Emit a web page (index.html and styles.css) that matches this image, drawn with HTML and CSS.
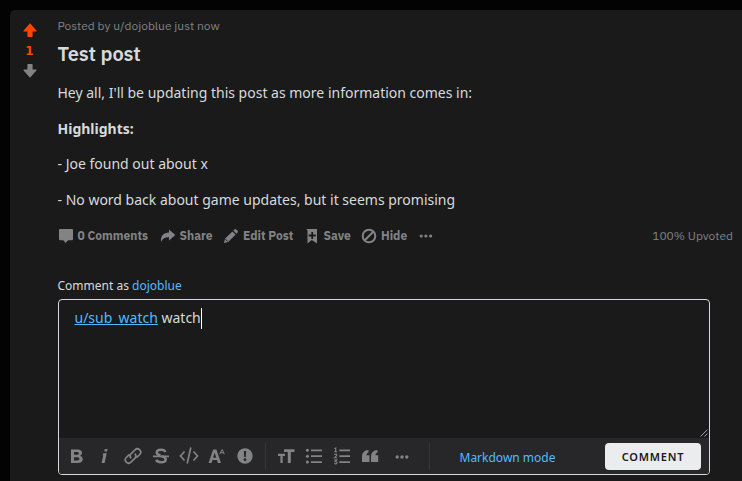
FILE: index.html
```html
<!DOCTYPE html>
<html lang="en">
<head>
<meta charset="utf-8">
<title>Test post</title>
<link rel="stylesheet" href="styles.css">
</head>
<body>
<main class="card">
  <aside class="votes">
    <svg class="vote up" viewBox="0 0 14 14"><path d="M7 0.3 13.6 7.7Q13.8 8.5 13 8.6H9.6V13.3Q9.6 14 9 14H5Q4.4 14 4.4 13.3V8.6H1Q.2 8.5.4 7.7Z"/></svg>
    <span class="score">1</span>
    <svg class="vote down" viewBox="0 0 14 14"><path d="M7 13.7 13.6 6.3Q13.8 5.5 13 5.4H9.6V.7Q9.6 0 9 0H5Q4.4 0 4.4.7V5.4H1Q.2 5.5.4 6.3Z"/></svg>
  </aside>
  <article class="post">
    <div class="byline">Posted by u/dojoblue just now</div>
    <h1>Test post</h1>
    <div class="body">
      <p>Hey all, I'll be updating this post as more information comes in:</p>
      <p><strong>Highlights:</strong></p>
      <p>- Joe found out about x</p>
      <p>- No word back about game updates, but it seems promising</p>
    </div>
    <div class="actions">
      <span class="action comments"><svg viewBox="0 0 16 16"><path d="M2 1H14Q15 1 15 2V11Q15 12.3 14 12.3H10L7.7 15 5.3 12.3H2Q1 12.3 1 11V2Q1 1 2 1Z"/></svg><b>0 Comments</b></span>
      <span class="action share"><svg viewBox="0 0 16 16"><path d="M9 1.5 15.3 7 9 12.5V9.3C5 9.2 3 10.5 1 14 .5 8 3.5 4.8 9 4.6Z"/></svg><b>Share</b></span>
      <span class="action edit"><svg viewBox="0 0 16 16"><path d="M1 15 2 10.8 9.4 3.4 12.6 6.6 5.2 14ZM10.3 2.5 11.4 1.4Q12.3.7 13.2 1.4L14.6 2.8Q15.3 3.7 14.6 4.6L13.5 5.7Z"/><path class="cut" d="M2.5 11.2 4.8 13.5"/></svg><b>Edit Post</b></span>
      <span class="action save"><svg viewBox="0 0 16 16"><path d="M2.2 1H13V15.5L7.8 12 3.5 15.5V2.6Z"/><path class="cut plus" d="M8.2 4V11M4.7 7.5H11.7"/></svg><b>Save</b></span>
      <span class="action hide"><svg viewBox="0 0 16 16"><g class="line"><circle cx="8" cy="8" r="6.3"/><path d="M3.8 12.2 12.2 3.8"/></g></svg><b>Hide</b></span>
      <svg class="more" viewBox="0 0 14 14"><circle cx="2.2" cy="7" r="1.6"/><circle cx="6.9" cy="7" r="1.6"/><circle cx="11.6" cy="7" r="1.6"/></svg>
      <span class="upvoted">100% Upvoted</span>
    </div>
    <div class="comment-as">Comment as <a>dojoblue</a></div>
    <section class="editor">
      <div class="input"><a>u/sub_watch</a> watch<i class="caret"></i>
        <svg class="grip" viewBox="0 0 8 8"><path d="M.5 7.5 7.5.5M4.5 7.5 7.5 4.5"/></svg>
      </div>
      <div class="toolbar">
        <svg class="tool" viewBox="0 0 20 20"><path fill-rule="evenodd" d="M4 3.5H10.5Q15 3.5 15 7 15 9.1 13 9.8 15.8 10.6 15.8 13 15.8 17 10.7 17H4ZM7 6V8.8H10Q11.9 8.8 11.9 7.4 11.9 6 10 6ZM7 11.2V14.5H10.3Q12.5 14.5 12.5 12.8 12.5 11.2 10.3 11.2Z"/></svg>
        <svg class="tool" viewBox="0 0 20 20"><path d="M9.8 3H12.6L12.1 5.5H9.3ZM8.2 7.2H11.7L9.6 17H6.6L8.3 9.4H7.7Z"/></svg>
        <svg class="tool stroke" viewBox="0 0 20 20"><path d="M8.2 12.3Q5.9 10 8.2 7.7L12 3.9Q14.3 1.6 16.7 3.9 19 6.2 16.7 8.5L13.6 11.6M11.8 7.7Q14.1 10 11.8 12.3L8 16.1Q5.7 18.4 3.3 16.1 1 13.8 3.3 11.5L6.4 8.4"/></svg>
        <svg class="tool strike" viewBox="0 0 20 20"><path d="M14.5 6Q13.5 3.8 10.2 3.8 5.8 3.8 5.8 6.5 5.8 8.5 9.5 9.3M10.5 10.2Q14.7 11 14.7 13.4 14.7 16.2 10.2 16.2 6.2 16.2 5.2 13.7"/><path class="thin" d="M2 10.3H18"/></svg>
        <svg class="tool stroke" viewBox="0 0 20 20"><path d="M5.5 5.5 1.5 10 5.5 14.5M14.5 5.5 18.5 10 14.5 14.5M11.8 1.5 8.2 17.5"/></svg>
        <svg class="tool" viewBox="0 0 20 20"><path fill-rule="evenodd" d="M6.2 3.5H9.4L14 17H10.9L10 14H5.4L4.5 17H1.5ZM7.7 6.4 6.1 11.7H9.3Z"/><path class="tiny" d="M12.8 8.2 15.2 3.5 17.3 8.2M13.5 6.8H16.7"/></svg>
        <svg class="tool" viewBox="0 0 20 20"><circle cx="10" cy="10" r="7.7"/><path class="dark" d="M8.8 5H11.2L10.8 11H9.2Z"/><circle class="dark" cx="10" cy="13.7" r="1.4"/></svg>
        <i class="rule first"></i>
        <svg class="tool" viewBox="0 0 20 20"><path d="M8 3.3H18.5V6H14.8V17H11.8V6H8ZM2 7.8H9V10H6.7V17H4.4V10H2Z"/></svg>
        <svg class="tool list" viewBox="0 0 20 20"><path d="M7 4.3H18M7 10.2H18M7 16.1H18"/><g><circle cx="3.4" cy="4.3" r="1.5"/><circle cx="3.4" cy="10.2" r="1.5"/><circle cx="3.4" cy="16.1" r="1.5"/></g></svg>
        <svg class="tool list" viewBox="0 0 20 20"><path d="M7.3 4.3H18M7.3 10.2H18M7.3 16.1H18"/><path class="num" d="M2.4 2.9 3.7 2.1V5.8M2.2 5.8H5.2M2.2 8.5Q4.8 7.5 4.8 9 4.8 9.8 2.4 11.8H5.2M2.2 14H4.8L3.3 15.6Q5 15.5 5 16.8 4.6 18.4 2.1 17.6"/></svg>
        <svg class="tool" viewBox="0 0 20 20"><path d="M8.5 4V6.2Q6.5 7 6.4 9.3H9.5V16H2V10.5Q2 4.5 8.5 4ZM17.5 4V6.2Q15.5 7 15.4 9.3H18.2V16H11V10.5Q11 4.5 17.5 4Z"/></svg>
        <svg class="tool dots" viewBox="0 0 20 20"><circle cx="5.2" cy="11" r="1.7"/><circle cx="10" cy="11" r="1.7"/><circle cx="14.8" cy="11" r="1.7"/></svg>
        <i class="rule second"></i>
        <a class="markdown">Markdown mode</a>
        <button>COMMENT</button>
      </div>
    </section>
  </article>
</main>
</body>
</html>
```
FILE: styles.css
```css
* { box-sizing: border-box; }
body {
  margin: 0;
  padding: 10px 0 0 10px;
  height: 481px;
  overflow: hidden;
  background: #030303;
  color: #d7dadc;
  font-family: "Noto Sans", sans-serif;
}
svg { display: block; flex: none; fill: currentColor; }
a { color: #4fbcff; }
.card {
  display: flex;
  height: 471px;
  background: #1a1a1b;
  border-top-left-radius: 5px;
}
.votes {
  width: 39px;
  flex: none;
  padding-top: 13px;
  display: flex;
  flex-direction: column;
  align-items: center;
}
.vote { width: 14px; height: 14px; }
.up, .score { color: #ff4500; }
.down { color: #818384; }
.score { height: 27px; font: 700 12px/28px "DejaVu Sans", sans-serif; }
.post { flex: 1; padding: 8px 9px 0 8.5px; }
.byline {
  font: 400 12px/16px "IBM Plex Sans", Inter, sans-serif;
  color: #818384;
}
h1 {
  margin: 8px 0 0;
  font: 600 20px/24px "IBM Plex Sans", Inter, sans-serif;
  letter-spacing: -0.1px;
}
.body { padding-top: 4.85px; height: 150px; }
.body p { margin: 0; padding: 11.1px 0 3.5px; font-size: 14px; line-height: 21px; }
.actions {
  display: flex;
  align-items: center;
  height: 24px;
  margin-top: 8px;
  color: #818384;
  font: 700 12px/16px "IBM Plex Sans", Inter, sans-serif;
}
.action { display: flex; align-items: center; gap: 4px; white-space: nowrap; }
.action svg { width: 16px; height: 16px; }
.comments { width: 102px; }
.share { width: 63.5px; }
.edit { width: 80.5px; }
.save { width: 57.5px; }
.hide { width: 56px; }
.more { width: 14px; height: 14px; margin-left: 2px; }
.upvoted { margin-left: auto; font-weight: 400; }
.cut { fill: none; stroke: #1a1a1b; }
.plus { stroke-width: 1.8; }
.line { fill: none; stroke: currentColor; stroke-width: 2; }
.comment-as { margin-top: 29px; font-size: 12px; line-height: 18px; }
.editor {
  width: 652px;
  height: 176px;
  margin: 4px 0 0 0.5px;
  border: 1px solid #d7dadc;
  border-radius: 4px;
  overflow: hidden;
}
.input { position: relative; height: 138px; padding: 7px 15.5px; font-size: 14px; line-height: 21px; }
.input a { text-decoration: underline; }
.caret { display: inline-block; width: 1px; height: 21px; margin-left: 0.5px; background: #fff; vertical-align: -6px; }
.grip { position: absolute; right: 1px; bottom: 1px; width: 8px; height: 8px; fill: none; stroke: #a0a0a0; }
.toolbar {
  display: flex;
  align-items: center;
  height: 36px;
  padding: 0 8px;
  background: #272729;
  color: #818384;
}
.tool { width: 20px; height: 20px; margin-right: 8px; }
.stroke, .strike, .list { fill: none; stroke: currentColor; stroke-width: 1.7; }
.strike { stroke-width: 2.5; }
.thin { stroke-width: 1.7; }
.tiny { fill: none; stroke: currentColor; stroke-width: 1; }
.dark { fill: #272729; }
.list g { fill: currentColor; stroke: none; }
.num { stroke-width: 1.1; }
.dots { margin-left: 4px; }
.rule { flex: none; width: 1px; height: 27px; background: #343536; }
.first { margin: 0 10px 0 2px; }
.second { margin-left: 9px; }
.markdown { margin-left: 29.5px; padding-top: 3px; font-size: 12px; line-height: 16px; white-space: nowrap; }
button {
  width: 96px;
  height: 27px;
  margin-left: auto;
  padding: 0;
  border: 0;
  border-radius: 4px;
  background: #ebecee;
  color: #1a1a1b;
  font: 600 11px/27px "Noto Sans", sans-serif;
  letter-spacing: 0.8px;
}
```
